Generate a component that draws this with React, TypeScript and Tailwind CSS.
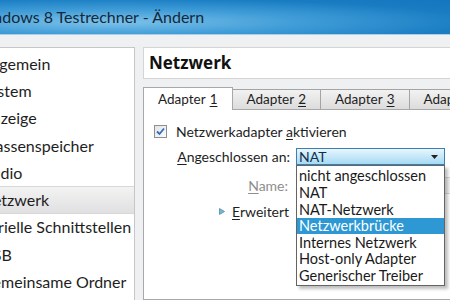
import React from 'react';

const navItems = [
  'Allgemein',
  'System',
  'Anzeige',
  'Massenspeicher',
  'Audio',
  'Netzwerk',
  'Serielle Schnittstellen',
  'USB',
  'Gemeinsame Ordner',
];

const attachOptions = [
  'nicht angeschlossen',
  'NAT',
  'NAT-Netzwerk',
  'Netzwerkbrücke',
  'Internes Netzwerk',
  'Host-only Adapter',
  'Generischer Treiber',
];

const tabs = ['1', '2', '3', '4'];

// Buchstabe mit Unterstrich (Tastenkürzel)
const Mn: React.FC<{ children: React.ReactNode }> = ({ children }) => (
  <span className="underline underline-offset-2 decoration-1">{children}</span>
);

const App: React.FC = () => {
  return (
    <div className="w-[450px] h-[300px] overflow-hidden bg-[#eef0f2] font-['Lato',sans-serif] text-[#1e1e1e] flex flex-col">
      {/* Titelleiste */}
      <div className="h-[35px] shrink-0 overflow-hidden flex items-center bg-[radial-gradient(ellipse_at_25%_65%,#7cc2ea_0%,#3f9cd7_40%,#1a7dc3_75%,#1376bf_100%)] border-b border-[#a9d0ea]">
        <span className="-ml-[27px] text-[16px] text-[#15283a] whitespace-nowrap">
          Windows 8 Testrechner - Ändern
        </span>
      </div>

      <div className="flex-1 flex pt-[12px] gap-[8px] min-h-0">
        {/* Kategorien */}
        <div className="w-[135px] shrink-0 bg-white border-t border-r border-[#c6c6c6] pt-[2px] overflow-hidden">
          {navItems.map((item) => (
            <div
              key={item}
              className={`h-[27.3px] flex items-center whitespace-nowrap text-[16px] ${
                item === 'Netzwerk'
                  ? 'bg-linear-to-b from-[#f3f3f3] to-[#e0e0e2] border-y border-[#d8d8d8]'
                  : ''
              }`}
            >
              <span className="-ml-[19px]">{item}</span>
            </div>
          ))}
        </div>

        {/* Einstellungen */}
        <div className="w-[330px] shrink-0 flex flex-col">
          <div className="h-[32px] shrink-0 bg-white border border-[#d4d4d4] flex items-center pl-[5px] font-['Open_Sans',sans-serif] text-[17px] font-bold text-[#111]">
            Netzwerk
          </div>

          {/* Reiter */}
          <div className="mt-[8px] h-[22px] shrink-0 flex items-end">
            {tabs.map((n, i) => (
              <div
                key={n}
                className={`w-[89.5px] shrink-0 flex items-center justify-center text-[13.5px] whitespace-nowrap border-t border-x ${
                  i === 0
                    ? 'h-[23px] -mb-px bg-white border-[#a8a8a8] relative z-10'
                    : 'h-[20px] bg-linear-to-b from-[#f2f2f2] to-[#dcdcdc] border-[#a4a4a4] -ml-px'
                }`}
              >
                Adapter <span className="ml-[4px]"><Mn>{n}</Mn></span>
              </div>
            ))}
          </div>

          <div className="flex-1 bg-white border border-[#a8a8a8] pl-[10px] pt-[15px] text-[14px]">
            {/* Checkbox */}
            <div className="flex items-center gap-[9px] h-[13px]">
              <div className="w-[13px] h-[13px] border border-[#8f8f8f] bg-linear-to-br from-[#e4e4e4] to-[#fbfbfb] flex items-center justify-center">
                <svg width="9" height="9" viewBox="0 0 9 9">
                  <path d="M1 4.5 L3.5 7 L8 1.5" fill="none" stroke="#2f6fc0" strokeWidth="1.8" />
                </svg>
              </div>
              <span className="whitespace-nowrap">
                Netzwerkadapter <Mn>a</Mn>ktivieren
              </span>
            </div>

            {/* Angeschlossen an */}
            <div className="mt-[10px] flex items-center h-[17px]">
              <div className="w-[142px] shrink-0 text-right pr-[6px] whitespace-nowrap">
                <Mn>A</Mn>ngeschlossen an:
              </div>
              <div className="relative w-[149px] z-20">
                <div className="h-[17px] border border-[#3c7fb1] bg-linear-to-b from-[#e8f6fd] to-[#a4daf4] flex items-center px-[2px] text-[#10304d]">
                  <span className="flex-1 leading-none">NAT</span>
                  <svg width="7" height="4" viewBox="0 0 7 4" className="mr-[4px]">
                    <path d="M0 0 L7 0 L3.5 4 Z" fill="#222" />
                  </svg>
                </div>
                {/* aufgeklappte Liste */}
                <div className="absolute top-full left-0 w-[149px] bg-white border border-[#646464] shadow-[3px_3px_3px_rgba(0,0,0,0.25)] pt-[2px] pb-px">
                  {attachOptions.map((opt) => (
                    <div
                      key={opt}
                      className={`h-[16.6px] flex items-center px-[2px] whitespace-nowrap text-[14.5px] ${
                        opt === 'Netzwerkbrücke' ? 'bg-[#2d98d3] text-white' : 'text-[#1a1a1a]'
                      }`}
                    >
                      {opt}
                    </div>
                  ))}
                </div>
              </div>
            </div>

            {/* Name */}
            <div className="mt-[12px] flex items-center h-[17px]">
              <div className="w-[142px] shrink-0 text-right pr-[8px] text-[#8d8d8d]">
                <Mn>N</Mn>ame:
              </div>
              <div className="w-[180px] h-[17px] border border-[#d9d9d9] bg-[#f4f4f4]" />
            </div>

            {/* Erweitert */}
            <div className="mt-[9px] flex items-center h-[17px] pl-[65px] gap-[7px]">
              <svg width="6" height="7" viewBox="0 0 6 7">
                <path d="M0.5 0.5 L5.5 3.5 L0.5 6.5 Z" fill="#7fb4cf" stroke="#4d8fb3" strokeWidth="0.8" />
              </svg>
              <span>
                <Mn>E</Mn>rweitert
              </span>
            </div>
          </div>
        </div>
      </div>
    </div>
  );
};

export default App;
